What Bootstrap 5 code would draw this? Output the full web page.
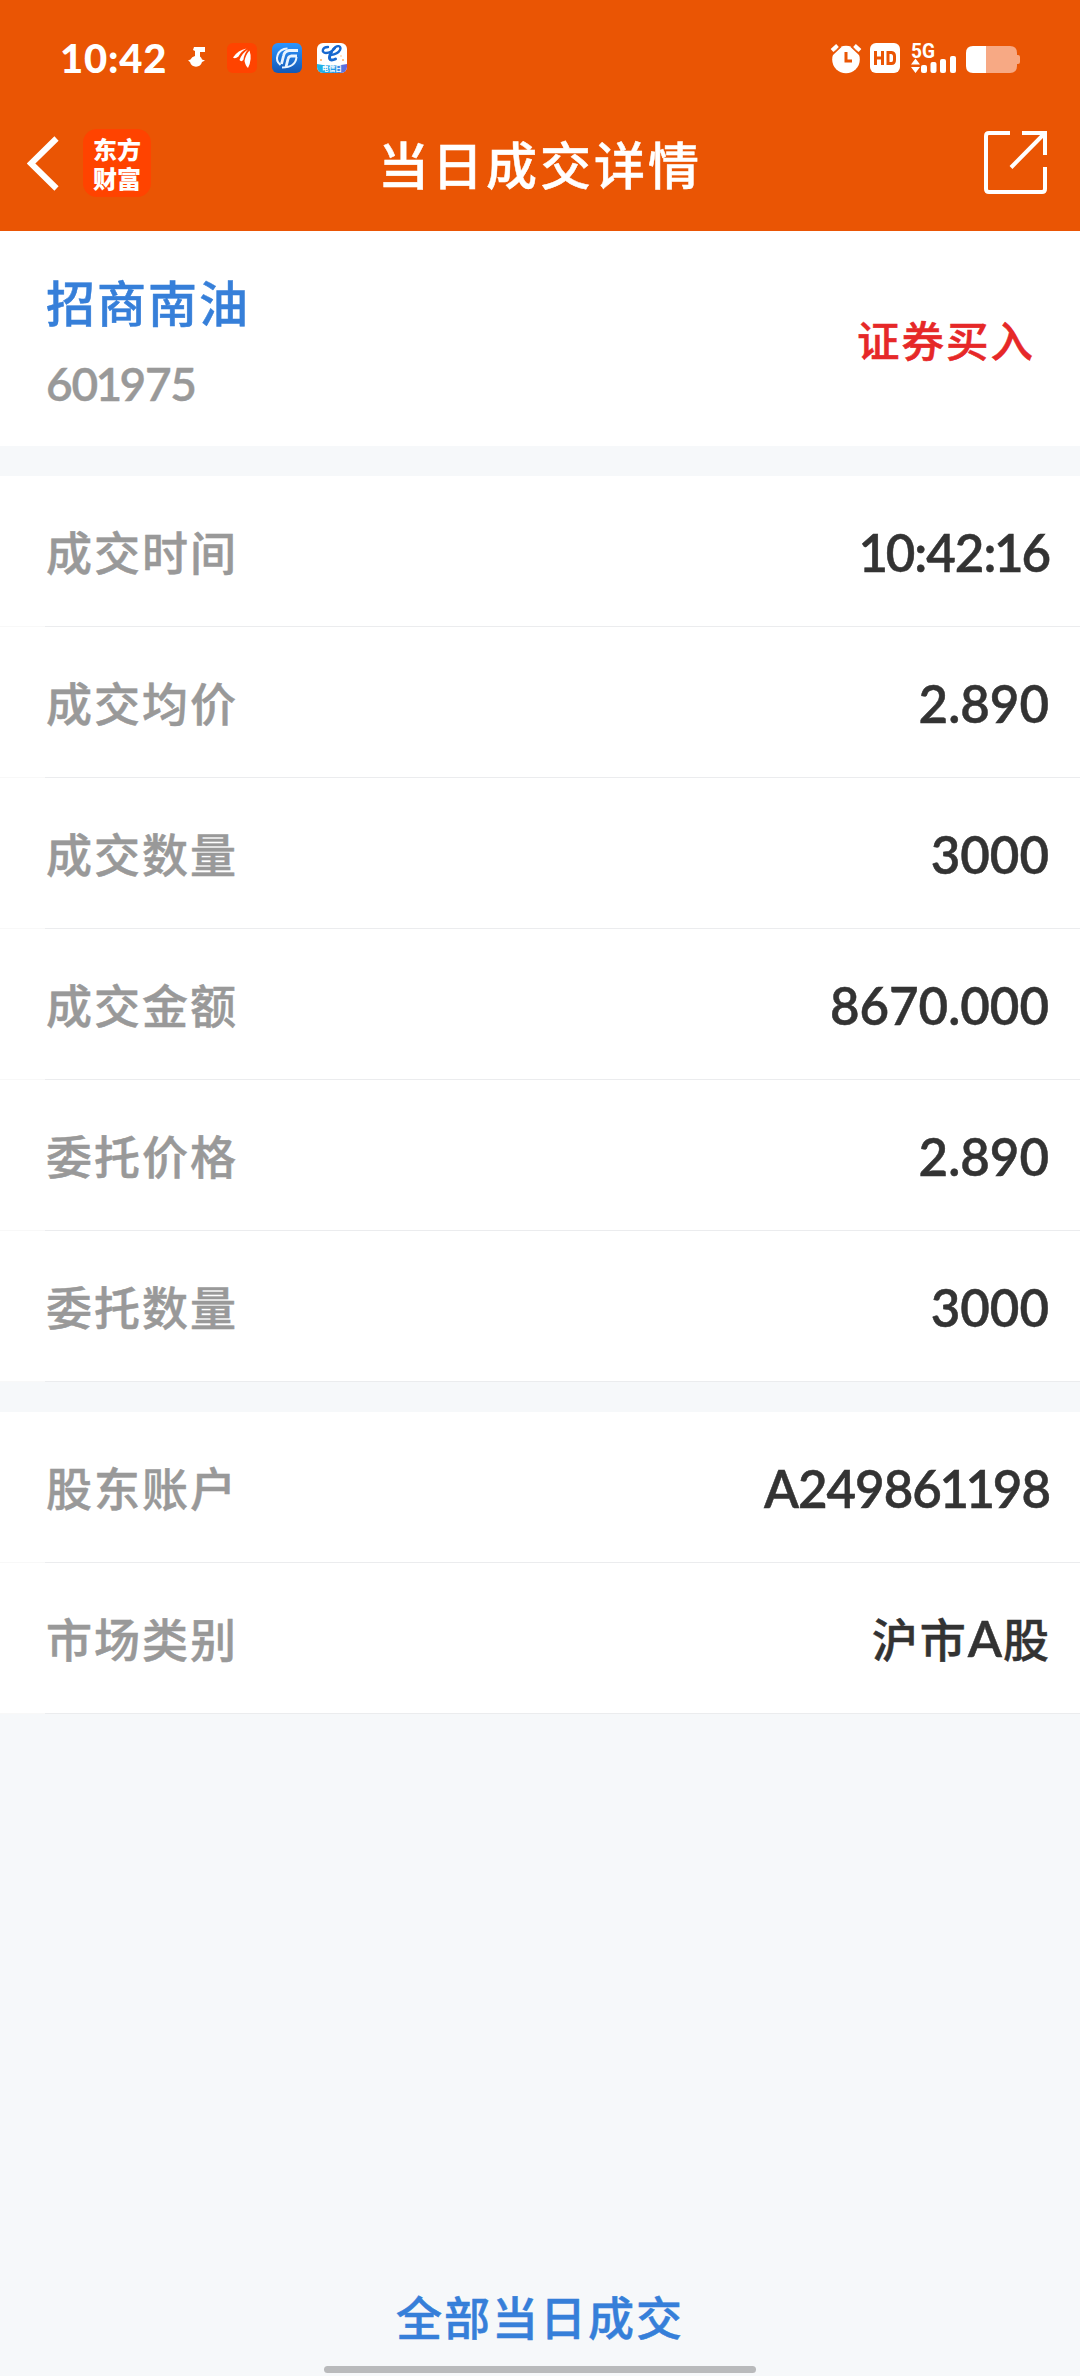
<!DOCTYPE html>
<html lang="zh-CN">
<head>
<meta charset="utf-8">
<meta name="viewport" content="width=device-width, initial-scale=1">
<title>当日成交详情</title>
<link href="https://cdn.jsdelivr.net/npm/bootstrap@5.3.0/dist/css/bootstrap.min.css" rel="stylesheet">
<style>
body{background:#f6f8fa;font-family:Lato,"Noto Sans CJK SC",sans-serif;font-weight:500;color:#333;overflow:hidden}
.screen{height:2376px}
.cjk{font-family:"Noto Sans CJK SC",sans-serif;-webkit-text-stroke:.5px currentColor}
.topbar{background:#ea5504;height:231px;color:#fff}
.status{height:98px;padding:18px 60px 0 60px}
.status svg{overflow:visible}
.clock{font-size:40px;font-weight:900;width:128px;letter-spacing:.8px;line-height:40px;white-space:nowrap}
.left-icons{gap:15px;margin-left:22px}
.nav-row{height:133px;padding:0 32px 0 27px}
.nav-side{width:130px}
.applogo{width:68px;height:68px;border-radius:14px;background:#ff4300;font-size:24px;font-weight:900;margin:0 0 3px 24px;-webkit-text-stroke:0}
.applogo span{line-height:29px}
.title{font-size:51px;letter-spacing:3px;line-height:60px;padding-left:5px;margin-bottom:4px}
.share{margin-bottom:3px}
.summary{height:215px;padding:0 45px 0 46px}
.stock{font-size:49px;letter-spacing:2px;line-height:60px;color:#367fd9;padding-top:2px}
.code{font-size:46px;line-height:50px;color:#999;font-weight:600;letter-spacing:-1.3px;margin-top:28px;-webkit-text-stroke:.4px currentColor}
.side{font-size:42.5px;letter-spacing:2px;color:#e62828;line-height:60px}
.group{margin-top:30px}
.item{height:151px;padding:0 31px 0 46px;background:linear-gradient(to right,#f8f8f8 45px,#ebecee 45px) bottom/100% 1px no-repeat #fff}
.item-label{font-size:46px;letter-spacing:2px;color:#999;padding-bottom:3px}
.item-value{font-size:51px;font-weight:600;padding-top:4px;-webkit-text-stroke:.5px currentColor}
.item-value.cjk{font-size:46px;font-weight:500;letter-spacing:2px;margin-right:-2px;padding:0 0 3px}
.tight{letter-spacing:-1px;margin-right:-1px}
.latin{font-family:Lato,sans-serif;font-size:50px;font-weight:600;letter-spacing:1px;line-height:1}
.one{margin:0 -1.3px}
.all-link{font-size:46px;letter-spacing:2px;line-height:60px;color:#367fd9;text-decoration:none}
.homebar{width:432px;height:7px;border-radius:4px;background:#b9babc;margin:21px 0 3px}
</style>
<script src="https://cdn.jsdelivr.net/npm/bootstrap@5.3.0/dist/js/bootstrap.bundle.min.js"></script>
</head>
<body>
<div class="screen d-flex flex-column">
  <header class="topbar">
    <div class="status d-flex align-items-center justify-content-between">
      <div class="d-flex align-items-center">
        <span class="clock">10:42</span>
        <svg width="17" height="22" viewBox="0 0 17 22" fill="#fff"><path d="M6 0H17V5H12V9.500A7 6 0 0 1 14 12.500L17 13.500L14 15A6.200 6.200 0 0 1 2 15L0 13.500L2.500 12.500A6 6 0 0 1 7 9V4L5 3Z"/></svg>
        <div class="d-flex left-icons">
          <svg width="30" height="30" viewBox="0 0 30 30"><rect width="30" height="30" rx="6" fill="#ff4300"/><path d="M19.500 5.500Q11 7 6 14.500Q8 16.500 11.500 13.500Q14 8.500 19.500 5.500ZM21 6.500Q15 10 12.500 17Q14.500 19.500 16.500 16.500Q17 11 21 6.500ZM22.500 7.500Q18.500 12 17.500 18Q18.500 23 21 25Q25.500 16 22.500 7.500Z" fill="#fff"/></svg>
          <svg width="30" height="30" viewBox="0 0 30 30"><defs><linearGradient id="blue" x2="0" y2="1"><stop stop-color="#2c95ff"/><stop offset="1" stop-color="#1458b4"/></linearGradient></defs><rect width="30" height="30" rx="6" fill="url(#blue)"/><g fill="none" stroke="#e9f4ff"><path d="M15.500 5.500C5 6 2 17 8.500 22" stroke-width="2"/><path d="M26 7.500H17Q12.500 8 11.500 13L9.500 21" stroke-width="2.800"/><path d="M25 13H19Q16.500 13.500 16 16L14 24" stroke-width="2.800"/><path d="M24.500 14C24 20 20 24.500 10 24.500" stroke-width="2"/></g></svg>
          <svg width="30" height="30" viewBox="0 0 30 30"><defs><clipPath id="tile"><rect width="30" height="30" rx="6"/></clipPath><linearGradient id="sea"><stop stop-color="#21b7e6"/><stop offset=".6" stop-color="#279be8"/><stop offset="1" stop-color="#7063d9"/></linearGradient></defs><g clip-path="url(#tile)"><rect width="30" height="30" fill="#fff"/><path d="M0 21Q15 24 30 21V30H0Z" fill="url(#sea)"/><g fill="none" stroke="#1768cf" stroke-linecap="round"><path d="M11 4C5 4 4 10 9 10Q14 10 18 5" stroke-width="2.400"/><path d="M16 6.500C20 1 25 3 23 7Q21 11 13.500 12" stroke-width="2.400"/><path d="M14.500 9C11 15 12 19 18.500 16" stroke-width="3"/></g><g fill="#ffae62"><circle cx="4" cy="17" r="1"/><circle cx="26" cy="17" r="1"/><circle cx="24" cy="13" r=".7"/></g><text x="15" y="28.300" font-size="6.600" font-weight="700" text-anchor="middle" fill="#fff" font-family="Noto Sans CJK SC">电信日</text></g></svg>
        </div>
      </div>
      <svg width="190" height="32" viewBox="830 42 190 32" fill="#fff">
        <circle cx="846" cy="59.500" r="13.800"/><path d="M832 50.500L837.500 45.500M854.500 45.500L860 50.500" stroke="#fff" stroke-width="4"/><path d="M832.500 54.500L841 46.500M851 46.500L859.500 54.500" stroke="#ea5504" stroke-width="1.500"/><path d="M846 52V61H852" fill="none" stroke="#ea5504" stroke-width="3"/>
        <rect x="870" y="43" width="30" height="30" rx="6"/>
        <path d="M875.500 51V65M882.500 51V65M875.500 58H882.500M888 52.500H891.500Q894.500 53 894.500 56V60Q894.500 63.500 891.500 63.500H888Z" fill="none" stroke="#ea5504" stroke-width="3"/>
        <text x="911" y="57.500" font-family="Roboto" font-size="20" font-weight="700" textLength="24" lengthAdjust="spacingAndGlyphs">5G</text>
        <path d="M911 64.500L915.500 58.500L920 64.500ZM911 67L915.500 73L920 67Z"/>
        <rect x="921" y="65" width="6" height="8" rx="2"/><rect x="930.500" y="62" width="6" height="11" rx="2"/><rect x="940" y="59" width="6" height="14" rx="2"/><rect x="950" y="56" width="6" height="17" rx="2"/>
        <path d="M986 46H1010Q1017 46 1017 53V55H1018Q1020 55 1020 57V62Q1020 64 1018 64H1017V66Q1017 73 1010 73H986Z" fill="#f7a984"/><path d="M973 46H986V73H973Q966 73 966 66V53Q966 46 973 46Z"/>
      </svg>
    </div>
    <nav class="nav-row d-flex align-items-center justify-content-between">
      <div class="nav-side d-flex align-items-center">
        <svg width="32" height="60" viewBox="27 134.500 32 60"><path d="M56.500 138.500L31 163.500L56.500 188.500" transform="translate(0 -.5)" fill="none" stroke="#fff" stroke-width="6"/></svg>
        <div class="applogo cjk d-flex flex-column align-items-center justify-content-center"><span>东方</span><span>财富</span></div>
      </div>
      <div class="title cjk">当日成交详情</div>
      <div class="nav-side d-flex justify-content-end">
        <svg class="share" width="64" height="64" viewBox="0 0 64 64" fill="none" stroke="#fff" stroke-width="4"><path d="M26 2H5Q2 2 2 5V58Q2 61 5 61H58Q61 61 61 58V36M38 2H61V24M60 3L27 36.500"/></svg>
      </div>
    </nav>
  </header>
  <section class="summary bg-white d-flex align-items-center justify-content-between">
    <div><div class="stock cjk">招商南油</div><div class="code">60<span class="one">1</span>975</div></div>
    <div class="side cjk">证券买入</div>
  </section>
  <section class="group">
    <div class="item d-flex align-items-center justify-content-between"><span class="item-label cjk">成交时间</span><span class="item-value tight"><span class="one">1</span>0:42:<span class="one">1</span>6</span></div>
    <div class="item d-flex align-items-center justify-content-between"><span class="item-label cjk">成交均价</span><span class="item-value">2.890</span></div>
    <div class="item d-flex align-items-center justify-content-between"><span class="item-label cjk">成交数量</span><span class="item-value">3000</span></div>
    <div class="item d-flex align-items-center justify-content-between"><span class="item-label cjk">成交金额</span><span class="item-value">8670.000</span></div>
    <div class="item d-flex align-items-center justify-content-between"><span class="item-label cjk">委托价格</span><span class="item-value">2.890</span></div>
    <div class="item d-flex align-items-center justify-content-between"><span class="item-label cjk">委托数量</span><span class="item-value">3000</span></div>
  </section>
  <section class="group">
    <div class="item d-flex align-items-center justify-content-between"><span class="item-label cjk">股东账户</span><span class="item-value tight">A24986<span class="one">1</span><span class="one">1</span>98</span></div>
    <div class="item d-flex align-items-center justify-content-between"><span class="item-label cjk">市场类别</span><span class="item-value cjk">沪市<span class="latin">A</span>股</span></div>
  </section>
  <footer class="mt-auto d-flex flex-column align-items-center">
    <a class="all-link cjk" href="#">全部当日成交</a>
    <div class="homebar"></div>
  </footer>
</div>
</body>
</html>
